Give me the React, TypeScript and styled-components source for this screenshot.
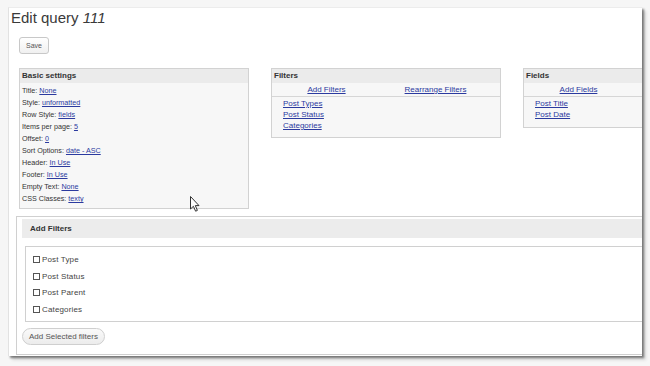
import React from "react";
import styled, { createGlobalStyle } from "styled-components";

const Global = createGlobalStyle`
  html, body { margin: 0; padding: 0; }
  body {
    background: #f6f6f6;
    font-family: "Liberation Sans", Arial, sans-serif;
    color: #333;
  }
`;

const Screen = styled.div`
  width: 650px;
  height: 366px;
  padding: 7px 0 0 8px;
  box-sizing: border-box;
  overflow: hidden;
`;

const Window = styled.div`
  position: relative;
  width: 634px;
  height: 349px;
  box-sizing: border-box;
  background: #fff;
  border-left: 1px solid #e2e2e2;
  border-top: 1px solid #ececec;
  box-shadow: 2px 2px 2px rgba(0, 0, 0, 0.45), 4px 4px 3px rgba(0, 0, 0, 0.12);
  overflow: hidden;
`;

const Title = styled.h1`
  margin: 1px 0 0 2px;
  font-size: 15px;
  line-height: 18px;
  font-weight: normal;
  color: #3a3a3a;
  em { font-style: italic; }
`;

const SaveButton = styled.button`
  display: block;
  margin: 10px 0 0 10px;
  width: 30px;
  height: 17px;
  padding: 0;
  border: 1px solid #c8c8c8;
  border-radius: 3px;
  background: linear-gradient(#ffffff, #f0f0f0);
  font-family: inherit;
  font-size: 7px;
  color: #555;
`;

const BoxRow = styled.div`
  display: flex;
  align-items: flex-start;
  margin: 14px 0 0 10px;
  gap: 22px;
  width: 760px;
`;

const Box = styled.div<{ $h: number }>`
  flex: none;
  width: 230px;
  height: ${(p) => p.$h}px;
  box-sizing: border-box;
  border: 1px solid #d2d2d2;
  background: #f7f7f7;
`;

const BoxHeader = styled.div`
  height: 14px;
  line-height: 14px;
  padding-left: 2px;
  background: #ebebeb;
  font-size: 8px;
  font-weight: bold;
  color: #333;
`;

const SettingList = styled.div`
  padding: 2px 0 0 2px;
`;

const Setting = styled.div`
  font-size: 7.2px;
  line-height: 12px;
  color: #333;
  white-space: nowrap;
`;

const Link = styled.a`
  color: #2b3a9f;
  text-decoration: underline;
  cursor: pointer;
`;

const LinkBar = styled.div`
  display: grid;
  grid-template-columns: 1fr 1fr;
  padding-right: 10px;
  height: 13px;
  line-height: 14px;
  border-bottom: 1px solid #d6d6d6;
  font-size: 8px;
  text-align: center;
`;

const ItemList = styled.div`
  padding: 1px 0 0 11px;
  font-size: 8px;
  line-height: 11px;
`;

const Item = styled.div``;

const Section = styled.div`
  margin: 7px 0 0 7px;
  width: 700px;
  height: 139px;
  box-sizing: border-box;
  border: 1px solid #d0d0d0;
  padding: 2px 0 0 5px;
`;

const SectionHeader = styled.div`
  height: 19px;
  line-height: 19px;
  padding-left: 8px;
  background: #ececec;
  font-size: 8px;
  font-weight: bold;
  color: #333;
`;

const CheckPanel = styled.div`
  margin: 8px 0 0 3px;
  height: 76px;
  box-sizing: border-box;
  border: 1px solid #d0d0d0;
  padding: 4px 0 0 7px;
`;

const CheckRow = styled.label`
  display: flex;
  align-items: center;
  gap: 2px;
  height: 16.7px;
  font-size: 8px;
  letter-spacing: 0.15px;
  color: #444;
`;

const Box7 = styled.span`
  display: inline-block;
  width: 7px;
  height: 7px;
  box-sizing: border-box;
  border: 1px solid #555;
  background: #fff;
`;

const PillButton = styled.button`
  display: block;
  margin: 6px 0 0 0;
  width: 83px;
  height: 17px;
  padding: 0;
  border: 1px solid #cfcfcf;
  border-radius: 9px;
  background: linear-gradient(#fafafa, #ececec);
  font-family: inherit;
  font-size: 8px;
  color: #555;
`;

const Cursor = styled.svg`
  position: absolute;
  left: 181px;
  top: 188px;
`;

const settings: [string, string][] = [
  ["Title", "None"],
  ["Style", "unformatted"],
  ["Row Style", "fields"],
  ["Items per page", "5"],
  ["Offset", "0"],
  ["Sort Options", "date - ASC"],
  ["Header", "In Use"],
  ["Footer", "In Use"],
  ["Empty Text", "None"],
  ["CSS Classes", "texty"],
];

const filters = ["Post Type", "Post Status", "Post Parent", "Categories"];

export default function App() {
  return (
    <>
      <Global />
      <Screen>
        <Window>
          <Title>
            Edit query <em>111</em>
          </Title>
          <SaveButton>Save</SaveButton>
          <BoxRow>
            <Box $h={141}>
              <BoxHeader>Basic settings</BoxHeader>
              <SettingList>
                {settings.map(([k, v]) => (
                  <Setting key={k}>
                    {k}: <Link>{v}</Link>
                  </Setting>
                ))}
              </SettingList>
            </Box>
            <Box $h={70}>
              <BoxHeader>Filters</BoxHeader>
              <LinkBar>
                <Link>Add Filters</Link>
                <Link>Rearrange Filters</Link>
              </LinkBar>
              <ItemList>
                <Item><Link>Post Types</Link></Item>
                <Item><Link>Post Status</Link></Item>
                <Item><Link>Categories</Link></Item>
              </ItemList>
            </Box>
            <Box $h={60}>
              <BoxHeader>Fields</BoxHeader>
              <LinkBar>
                <Link>Add Fields</Link>
                <span />
              </LinkBar>
              <ItemList>
                <Item><Link>Post Title</Link></Item>
                <Item><Link>Post Date</Link></Item>
              </ItemList>
            </Box>
          </BoxRow>
          <Section>
            <SectionHeader>Add Filters</SectionHeader>
            <CheckPanel>
              {filters.map((f) => (
                <CheckRow key={f}>
                  <Box7 />
                  {f}
                </CheckRow>
              ))}
            </CheckPanel>
            <PillButton>Add Selected filters</PillButton>
          </Section>
          <Cursor width="11" height="17" viewBox="0 0 11 17">
            <path
              d="M0.5 0.5 L0.5 13 L3.4 10.3 L5.6 15.2 L7.4 14.4 L5.3 9.6 L9 9.6 Z"
              fill="#fff"
              stroke="#333"
              strokeWidth="1"
              strokeLinejoin="round"
            />
          </Cursor>
        </Window>
      </Screen>
    </>
  );
}
